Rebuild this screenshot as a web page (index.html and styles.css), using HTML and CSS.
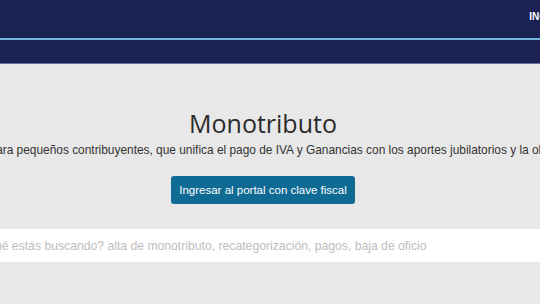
FILE: index.html
```html
<!DOCTYPE html>
<html lang="es">
<head>
  <meta charset="UTF-8" />
  <meta name="viewport" content="width=device-width, initial-scale=1.0" />
  <title>Monotributo</title>
  <link rel="stylesheet" href="styles.css">
</head>
<body>
  <header class="topbar">
    <div class="topbar-inner">
      <a class="login-link" href="#">INGRESAR</a>
    </div>
    <div class="topbar-line"></div>
    <div class="topbar-sub"></div>
  </header>

  <main class="hero">
    <div class="hero-inner">
      <h1>Monotributo</h1>
      <p class="lead">Régimen simplificado para pequeños contribuyentes, que unifica el pago de IVA y Ganancias con los aportes jubilatorios y la obra social.</p>
      <a class="btn" href="#">Ingresar al portal con clave fiscal</a>
      <div class="search">
        <input type="text" placeholder="¿Qué estás buscando? alta de monotributo, recategorización, pagos, baja de oficio">
      </div>
    </div>
  </main>
</body>
</html>
```

FILE: styles.css
```css
html, body {
  margin: 0;
  padding: 0;
}
body {
  background-color: #e8e8e8;
  font-family: 'Liberation Sans', Arial, sans-serif;
  color: #333;
  overflow: hidden;
  height: 304px;
}
.topbar {
  background-color: #1b2152;
  height: 63px;
  border-bottom: 1px solid #6a6f96;
}
.topbar-inner {
  height: 38px;
  display: flex;
  justify-content: flex-end;
  align-items: flex-start;
}
.login-link {
  color: #fff;
  font-weight: bold;
  font-size: 10px;
  text-decoration: none;
  margin-top: 11px;
  margin-right: -42px;
}
.topbar-line {
  height: 2px;
  background-color: #73b6df;
}
.hero {
  width: 900px;
  margin-left: -187px;
}
.hero-inner {
  display: flex;
  flex-direction: column;
  align-items: center;
  padding-top: 41px;
}
h1 {
  font-family: 'Open Sans', sans-serif;
  font-weight: 400;
  font-size: 25px;
  color: #2b2b2b;
  margin: 0;
  line-height: 36px;
}
.lead {
  font-size: 11.9px;
  line-height: 14px;
  margin: 2px 60px 0 0;
  white-space: nowrap;
  color: #333;
}
.btn {
  margin-top: 19px;
  background-color: #0f6a94;
  color: #fff;
  font-size: 11.5px;
  line-height: 14px;
  text-decoration: none;
  padding: 7px 8px;
  border-radius: 3px;
  white-space: nowrap;
}
.search {
  margin-top: 25px;
  width: 590px;
  background-color: #fff;
  height: 33px;
  display: flex;
  align-items: center;
}
.search input {
  border: none;
  outline: none;
  background: transparent;
  font-family: 'Liberation Sans', Arial, sans-serif;
  font-size: 12.2px;
  padding: 0 10px;
  width: 100%;
  color: #333;
}
.search input::placeholder {
  color: #bdbdbd;
}
```
